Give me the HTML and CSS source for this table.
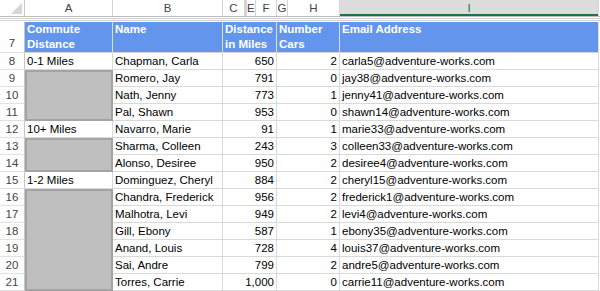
FILE: index.html
```html
<!DOCTYPE html>
<html>
<head>
<meta charset="utf-8">
<link rel="stylesheet" href="styles.css">
</head>
<body>
<div class="sheet">
  <div class="colhdr">
    <div class="ch corner"><svg width="24" height="16" viewBox="0 0 24 16"><polygon points="22,3 22,14 11,14" fill="#d6d6d6"/></svg></div>
    <div class="ch w-a">A</div>
    <div class="ch w-b">B</div>
    <div class="ch w-c">C</div>
    <div class="ch w-d"></div>
    <div class="ch w-e">E</div>
    <div class="ch w-f">F</div>
    <div class="ch w-g">G</div>
    <div class="ch w-h">H</div>
    <div class="ch w-i sel">I</div>
  </div>
  <div class="hidden-rows"></div>
  <div class="grid">
    <div class="rh rh7">7</div>
    <div class="hd">Commute Distance</div>
    <div class="hd">Name</div>
    <div class="hd">Distance in Miles</div>
    <div class="hd">Number Cars</div>
    <div class="hd">Email Address</div>

    <div class="rh">8</div><div class="c">0-1 Miles</div><div class="c">Chapman, Carla</div><div class="c n">650</div><div class="c n">2</div><div class="c">carla5@adventure-works.com</div>
    <div class="rh">9</div><div class="blank span3"></div><div class="c">Romero, Jay</div><div class="c n">791</div><div class="c n">0</div><div class="c">jay38@adventure-works.com</div>
    <div class="rh">10</div><div class="c">Nath, Jenny</div><div class="c n">773</div><div class="c n">1</div><div class="c">jenny41@adventure-works.com</div>
    <div class="rh">11</div><div class="c">Pal, Shawn</div><div class="c n">953</div><div class="c n">0</div><div class="c">shawn14@adventure-works.com</div>
    <div class="rh">12</div><div class="c">10+ Miles</div><div class="c">Navarro, Marie</div><div class="c n">91</div><div class="c n">1</div><div class="c">marie33@adventure-works.com</div>
    <div class="rh">13</div><div class="blank span2"></div><div class="c">Sharma, Colleen</div><div class="c n">243</div><div class="c n">3</div><div class="c">colleen33@adventure-works.com</div>
    <div class="rh">14</div><div class="c">Alonso, Desiree</div><div class="c n">950</div><div class="c n">2</div><div class="c">desiree4@adventure-works.com</div>
    <div class="rh">15</div><div class="c">1-2 Miles</div><div class="c">Dominguez, Cheryl</div><div class="c n">884</div><div class="c n">2</div><div class="c">cheryl15@adventure-works.com</div>
    <div class="rh">16</div><div class="blank span6"></div><div class="c">Chandra, Frederick</div><div class="c n">956</div><div class="c n">2</div><div class="c">frederick1@adventure-works.com</div>
    <div class="rh">17</div><div class="c">Malhotra, Levi</div><div class="c n">949</div><div class="c n">2</div><div class="c">levi4@adventure-works.com</div>
    <div class="rh">18</div><div class="c">Gill, Ebony</div><div class="c n">587</div><div class="c n">1</div><div class="c">ebony35@adventure-works.com</div>
    <div class="rh">19</div><div class="c">Anand, Louis</div><div class="c n">728</div><div class="c n">4</div><div class="c">louis37@adventure-works.com</div>
    <div class="rh">20</div><div class="c">Sai, Andre</div><div class="c n">799</div><div class="c n">2</div><div class="c">andre5@adventure-works.com</div>
    <div class="rh">21</div><div class="c">Torres, Carrie</div><div class="c n">1,000</div><div class="c n">0</div><div class="c">carrie11@adventure-works.com</div>
  </div>
</div>
</body>
</html>
```

FILE: styles.css
```css
html, body {
  margin: 0;
  padding: 0;
  background: #ffffff;
}
body {
  font-family: "Liberation Sans", Arial, sans-serif;
  font-size: 11.5px;
  color: #000;
  width: 600px;
  height: 291px;
  overflow: hidden;
}
.sheet {
  width: 600px;
}
.colhdr {
  display: flex;
  height: 17px;
  box-sizing: border-box;
  border-bottom: 1px solid #bdbdbd;
}
.ch {
  box-sizing: border-box;
  height: 16px;
  line-height: 16px;
  text-align: center;
  color: #444;
  border-right: 1px solid #d4d4d4;
  overflow: hidden;
  background: #ffffff;
}
.corner { width: 25px; border-right: 1px solid #c6c6c6; }
.corner svg { display: block; }
.w-a { width: 88px; }
.w-b { width: 110px; }
.w-c { width: 22px; }
.w-d { width: 2px; border-right: 1px solid #d4d4d4; border-left: 1px solid #d4d4d4; }
.w-e { width: 9px; text-align: left; }
.w-f { width: 21px; }
.w-g { width: 11px; }
.w-h { width: 52px; }
.w-i { width: 259px; }
.sel {
  background: #dcdcdc;
  color: #217346;
  box-shadow: inset 0 -2px 0 #217346;
}
.hidden-rows {
  height: 5px;
  background:
    linear-gradient(#d4d4d4, #d4d4d4) 0 1px / 100% 1px no-repeat,
    linear-gradient(#d4d4d4, #d4d4d4) 0 3px / 100% 1px no-repeat;
}
.grid {
  display: grid;
  grid-template-columns: 25px 88px 110px 54px 63px 259px;
  grid-template-rows: 31px repeat(14, 17px);
}
.rh {
  box-sizing: border-box;
  border-right: 1px solid #c6c6c6;
  border-bottom: 1px solid #e1e1e1;
  color: #444;
  text-align: center;
  line-height: 16px;
}
.rh7 {
  display: flex;
  align-items: flex-end;
  justify-content: center;
  padding-bottom: 1px;
}
.hd {
  box-sizing: border-box;
  background: #6495ed;
  color: #ffffff;
  font-weight: bold;
  line-height: 15px;
  padding: 0 2px;
  border-right: 1px solid #d6e0f5;
  border-bottom: 1px solid #d4d4d4;
}
.c {
  box-sizing: border-box;
  border-right: 1px solid #d9d9d9;
  border-bottom: 1px solid #d9d9d9;
  line-height: 16px;
  padding: 0 2px;
  white-space: nowrap;
  overflow: hidden;
}
.n { text-align: right; }
.blank {
  box-sizing: border-box;
  background: #bfbfbf;
  border: 2px solid #a3a3a3;
}
.span2 { grid-row: span 2; }
.span3 { grid-row: span 3; }
.span6 { grid-row: span 6; }
```
